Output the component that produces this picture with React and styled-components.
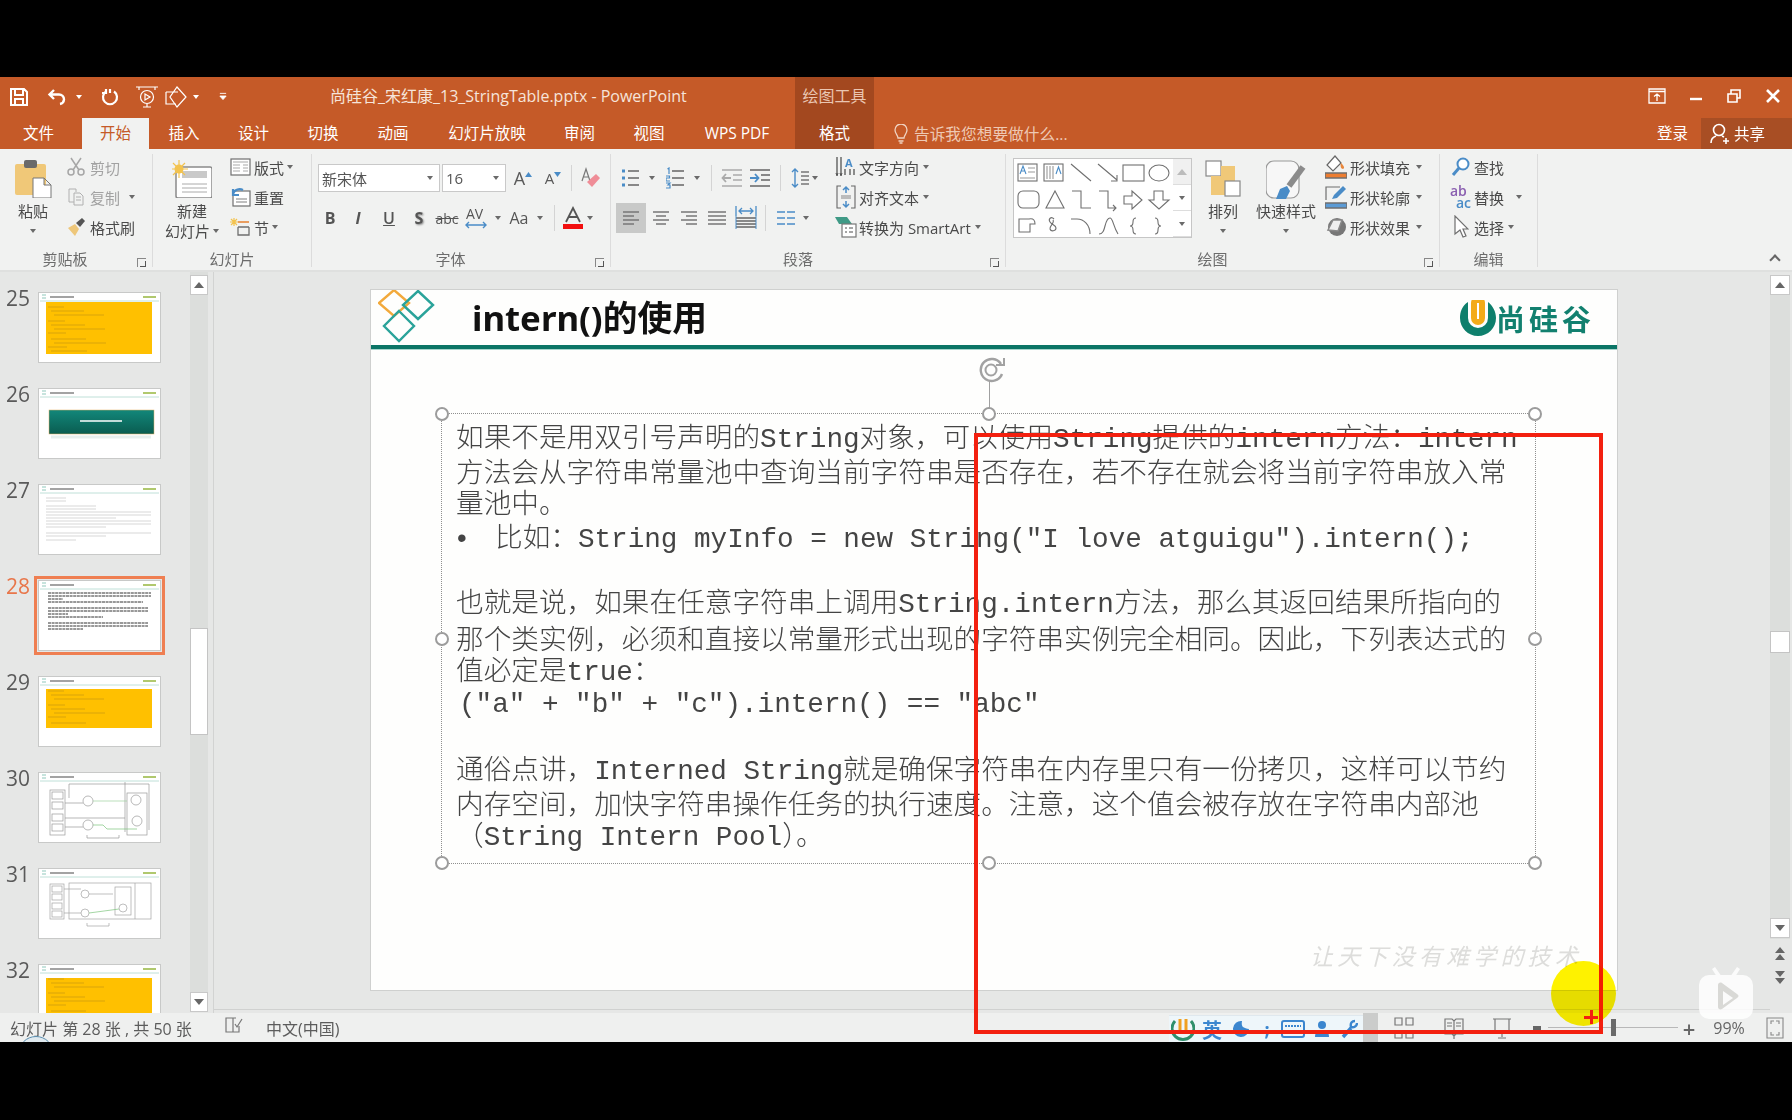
import styled, { createGlobalStyle } from "styled-components";

const GlobalStyle = createGlobalStyle`
  html, body { margin: 0; padding: 0; background: #000; }
  * { box-sizing: border-box; }
`;

const ORANGE = "#c55a28";
const INK = "#4a4a4a";
const BLUE = "#4a8cc7";
const GRAY = "#6f6f6f";

const Page = styled.div`
  position: relative;
  width: 1792px;
  height: 1120px;
  padding: 77px 0 78px;
  background: #000;
  overflow: hidden;
  font-family: "Open Sans", "Noto Sans CJK SC", sans-serif;
`;

const Window = styled.div`
  display: flex;
  flex-direction: column;
  height: 965px;
  filter: blur(0.45px);
`;

const TitleBar = styled.div`
  display: flex;
  align-items: stretch;
  height: 41px;
  background: ${ORANGE};
  color: #fbeee8;
`;

const Qat = styled.div`
  display: flex;
  align-items: center;
  width: 330px;
  padding-left: 9px;
  padding-bottom: 2px;
`;

const QatSlot = styled.div`
  display: flex;
  justify-content: center;
  width: ${(p) => p.$w}px;
  margin-left: ${(p) => p.$ml || 0}px;
`;

const DocTitle = styled.div`
  width: 465px;
  font-size: 16px;
  line-height: 38px;
  white-space: nowrap;
  color: #f6e4da;
`;

const ContextLabel = styled.div`
  width: 79px;
  background: #a3481f;
  text-align: center;
  font-size: 16px;
  line-height: 38px;
  color: #eac6b2;
`;

const WinControls = styled.div`
  display: flex;
  align-items: center;
  margin-left: auto;
  padding-bottom: 4px;
`;

const WinBtn = styled.div`
  display: flex;
  justify-content: center;
  width: 38.5px;
`;

const TabRow = styled.div`
  display: flex;
  height: 31px;
  background: ${ORANGE};
`;

const Tab = styled.div`
  width: ${(p) => p.$w}px;
  padding-right: ${(p) => p.$pr || 0}px;
  text-align: center;
  font-size: 15.5px;
  line-height: 30px;
  white-space: nowrap;
  color: ${(p) => (p.$active ? ORANGE : "#fff")};
  background: ${(p) => (p.$active ? "#f1f2f1" : p.$context ? "#a3481f" : "transparent")};
`;

const TellMe = styled.div`
  display: flex;
  align-items: center;
  gap: 5px;
  margin-left: 19px;
  width: 600px;
  font-size: 15.7px;
  color: #eec9b4;
`;

const SignIn = styled.div`
  margin-left: auto;
  width: 58px;
  padding-right: 13px;
  text-align: right;
  font-size: 15.5px;
  line-height: 30px;
  color: #fff;
`;

const Share = styled.div`
  display: flex;
  align-items: center;
  gap: 4px;
  width: 91px;
  padding-left: 9px;
  background: #a84e24;
  font-size: 15.5px;
  color: #fff;
`;

const Ribbon = styled.div`
  position: relative;
  display: flex;
  height: 123px;
  padding-top: 5px;
  background: #f1f2f1;
  border-bottom: 2px solid #dfe0df;
  color: ${INK};
  font-size: 15px;
`;

const Group = styled.div`
  display: flex;
  flex-direction: column;
  width: ${(p) => p.$w}px;
  height: 113px;
  border-right: 1px solid #dcdcdc;
`;

const GroupBody = styled.div`
  display: flex;
  height: 97px;
  padding-left: ${(p) => p.$pl}px;
  gap: ${(p) => p.$gap || 0}px;
`;

const GroupLabel = styled.div`
  position: relative;
  height: 16px;
  text-align: center;
  font-size: 15px;
  line-height: 16px;
  color: #6c6c6c;
  padding-right: ${(p) => p.$pr || 0}px;
`;

const Launcher = styled.span`
  position: absolute;
  right: 6px;
  bottom: 0;
  width: 9px;
  height: 9px;
  border-left: 1px solid #888;
  border-top: 1px solid #888;
  &::after {
    content: "";
    position: absolute;
    right: 0;
    bottom: 0;
    width: 5px;
    height: 5px;
    border-right: 1px solid #555;
    border-bottom: 1px solid #555;
  }
`;

const LargeBtn = styled.div`
  display: flex;
  flex-direction: column;
  align-items: center;
  width: ${(p) => p.$w}px;
  margin-left: ${(p) => p.$ml || 0}px;
  padding-top: 6px;
  line-height: 20px;
  white-space: nowrap;
`;

const LargeIcon = styled.div`
  display: flex;
  justify-content: center;
  height: 38px;
  margin-bottom: 3px;
`;

const LargeText = styled.div`
  display: flex;
  align-items: center;
  justify-content: center;
  height: 20px;
  gap: 3px;
`;

const SmallCol = styled.div`
  display: flex;
  flex-direction: column;
  margin-top: -2px;
  margin-left: ${(p) => p.$ml || 0}px;
`;

const SmallRow = styled.div`
  display: flex;
  align-items: center;
  height: 30px;
  gap: ${(p) => p.$gap ?? 3}px;
  white-space: nowrap;
  color: ${(p) => (p.$off ? "#a2a2a2" : INK)};
`;

const SmallIcon = styled.div`
  display: flex;
  justify-content: center;
  width: 22px;
`;

const Caret = styled.span`
  display: inline-block;
  flex: none;
  width: 0;
  height: 0;
  margin-left: ${(p) => p.$ml || 0}px;
  border-left: 3.5px solid transparent;
  border-right: 3.5px solid transparent;
  border-top: 4px solid ${(p) => p.$color || "#6a6a6a"};
`;

const ToolCol = styled.div`
  display: flex;
  flex-direction: column;
  gap: 12px;
  width: ${(p) => (p.$w ? `${p.$w}px` : "auto")};
  padding-top: 10px;
`;

const ToolRow = styled.div`
  display: flex;
  align-items: center;
  height: 28px;
`;

const Cell = styled.div`
  display: flex;
  align-items: center;
  justify-content: center;
  flex: none;
  width: ${(p) => p.$w}px;
  height: ${(p) => (p.$active ? "30px" : "auto")};
  background: ${(p) => (p.$active ? "#c8c9c8" : "transparent")};
  color: ${(p) => p.$color || "#555"};
  font-size: ${(p) => p.$size || 16}px;
  font-weight: ${(p) => p.$weight || 400};
  font-style: ${(p) => p.$italic || "normal"};
  text-decoration: ${(p) => p.$deco || "none"};
  text-shadow: ${(p) => (p.$shadow ? "1px 1px 2px #888" : "none")};
`;

const Sep = styled.span`
  flex: none;
  width: 1px;
  height: 26px;
  margin: 0 ${(p) => p.$m || 8}px;
  background: #d4d4d4;
`;

const FontBox = styled.div`
  display: flex;
  align-items: center;
  justify-content: space-between;
  width: ${(p) => p.$w}px;
  height: 28px;
  margin-right: 2px;
  padding: 0 6px 0 3px;
  background: #fff;
  border: 1px solid #c9c9c9;
  font-size: 15px;
  color: #555;
`;

const Gallery = styled.div`
  display: flex;
  width: 179px;
  height: 80px;
  margin-top: 4px;
  background: #fff;
  border: 1px solid #c6c6c6;
`;

const GalleryScroll = styled.div`
  display: flex;
  flex-direction: column;
  width: 18px;
  margin-left: auto;
  background: #ececec;
`;

const GalleryBtn = styled.div`
  display: flex;
  flex: 1;
  align-items: center;
  justify-content: center;
  background: ${(p) => (p.$light ? "#f0f0f0" : "#fff")};
  border-bottom: 1px solid #ddd;
`;

const ReplaceMark = styled.div`
  display: flex;
  flex-direction: column;
  width: 22px;
  font-size: 14px;
  line-height: 12px;
  font-weight: 600;
  color: #8a5fb0;
  span {
    padding-left: 6px;
    color: ${BLUE};
  }
`;

const Collapse = styled.div`
  position: absolute;
  right: 13px;
  bottom: 6px;
  width: 8px;
  height: 8px;
  border-left: 2px solid #666;
  border-top: 2px solid #666;
  transform: rotate(45deg);
`;

const Main = styled.div`
  display: flex;
  height: 741px;
  background: #e6e7e6;
`;

const ThumbPane = styled.div`
  display: flex;
  flex: none;
  width: 214px;
  height: 741px;
  border-right: 1px solid #d2d3d2;
  overflow: hidden;
`;

const ThumbList = styled.div`
  display: flex;
  flex-direction: column;
  gap: 25px;
  width: 190px;
  padding: 20px 0 0 6px;
`;

const ThumbRow = styled.div`
  display: flex;
  flex: none;
  height: 71px;
`;

const ThumbNum = styled.div`
  width: 32px;
  height: 20px;
  margin-top: -4px;
  font-size: 21px;
  line-height: 20px;
  color: ${(p) => (p.$active ? "#e8764a" : "#5a5a5a")};
`;

const ThumbCard = styled.div`
  width: 123px;
  height: 71px;
  background: #fff;
  border: 1px solid #c8c9c8;
  outline: ${(p) => (p.$active ? "3px solid #ef7f52" : "none")};
  outline-offset: 1px;
  svg { display: block; }
`;

const ScrollTrack = styled.div`
  display: flex;
  flex-direction: column;
  flex: none;
  width: ${(p) => p.$w || 18}px;
  height: ${(p) => p.$h || 738}px;
  padding-top: ${(p) => p.$pt || 0}px;
  background: #dcdedc;
`;

const ScrollBtn = styled.div`
  display: flex;
  flex: none;
  align-items: center;
  justify-content: center;
  height: 20px;
  margin-top: ${(p) => p.$mt || 0}px;
  background: #fff;
  border: 1px solid #c8c8c8;
`;

const ScrollThumb = styled.div`
  flex: none;
  height: ${(p) => p.$h}px;
  margin-top: ${(p) => p.$mt}px;
  background: #fff;
  border: 1px solid #c4c4c4;
`;

const Up = styled.span`
  width: 0;
  height: 0;
  border-left: 5px solid transparent;
  border-right: 5px solid transparent;
  border-bottom: 6px solid ${(p) => p.$color || "#666"};
`;

const Down = styled.span`
  width: 0;
  height: 0;
  border-left: 5px solid transparent;
  border-right: 5px solid transparent;
  border-top: 6px solid #666;
`;

const EditArea = styled.div`
  flex: 1;
  height: 738px;
  padding: 17px 0 0 156px;
  border-bottom: 1px solid #d0d1d0;
`;

const Slide = styled.div`
  position: relative;
  width: 1248px;
  height: 702px;
  background: #fefefd;
  border: 1px solid #cfd0cf;
`;

const SlideHeader = styled.div`
  display: flex;
  align-items: center;
  height: 59px;
  padding: 0 22px 0 7px;
  border-bottom: 4px solid #0b7566;
  box-shadow: 0 1px 0 #a8d6cd;
`;

const SlideTitle = styled.h1`
  margin: 0 0 0 36px;
  font-family: "Noto Sans", "Noto Sans CJK SC", sans-serif;
  font-size: 34.8px;
  font-weight: 700;
  line-height: 50px;
  color: #111;
`;

const Brand = styled.div`
  display: flex;
  align-items: center;
  gap: 0;
  margin-left: auto;
  font-family: "Noto Sans CJK SC", sans-serif;
  font-size: 29px;
  font-weight: 700;
  letter-spacing: 4px;
  color: #12806f;
`;

const SlideBody = styled.div`
  padding: 64px 0 0 70px;
`;

const SelectBox = styled.div`
  position: relative;
  width: 1095px;
  height: 451px;
  padding: 11px 0 0 14px;
  border: 1px dotted #8f8f8f;
  font-family: "Liberation Mono", "Noto Sans CJK SC", monospace;
  font-size: 27.65px;
  font-weight: 300;
  color: #444;
`;

const Line = styled.div`
  height: 30px;
  margin-top: ${(p) => p.$mt || 0}px;
  margin-left: ${(p) => p.$ml || 0}px;
  line-height: 30px;
  white-space: nowrap;
`;

const Bullet = styled.span`
  display: inline-block;
  width: 39px;
  padding-left: 1px;
  font-family: "Liberation Sans", sans-serif;
`;

const Handle = styled.span`
  position: absolute;
  left: ${(p) => p.$x}%;
  top: ${(p) => p.$y}%;
  width: 14px;
  height: 14px;
  margin: -7px 0 0 -7px;
  background: #fff;
  border: 2px solid #9c9c9c;
  border-radius: 50%;
`;

const RotateStem = styled.span`
  position: absolute;
  left: 50%;
  top: -34px;
  width: 1px;
  height: 28px;
  background: #a0a0a0;
`;

const RotateKnob = styled.span`
  position: absolute;
  left: calc(50% - 12px);
  top: -58px;
  line-height: 0;
`;

const Watermark = styled.div`
  position: absolute;
  right: 35px;
  bottom: 18px;
  font-family: "Noto Sans CJK SC", sans-serif;
  font-size: 23px;
  font-style: italic;
  letter-spacing: 4.2px;
  color: #dddddb;
`;

const RightBar = styled.div`
  display: flex;
  flex-direction: column;
  flex: none;
  width: 22px;
  padding: 3px 2px 0 0;
`;

const StepBtns = styled.div`
  display: flex;
  flex-direction: column;
  align-items: center;
  gap: 9px;
  padding-top: 8px;
`;

const StatusBar = styled.div`
  position: relative;
  display: flex;
  align-items: center;
  height: 29px;
  padding-left: 10px;
  background: #eff0ef;
  font-size: 16px;
  color: #5c5c5c;
  white-space: nowrap;
  overflow: hidden;
`;

const StatusText = styled.div`
  margin-left: ${(p) => p.$ml || 0}px;
  width: ${(p) => p.$w}px;
`;

const Arc = styled.span`
  position: absolute;
  left: 18px;
  top: 23px;
  width: 36px;
  height: 36px;
  background: #dfe9ee;
  border: 1px solid #5b8fb0;
  border-radius: 50%;
`;

const ImeBar = styled.div`
  display: flex;
  align-items: center;
  width: 194px;
  height: 27px;
  margin-left: auto;
  margin-top: 2px;
  background: #eef6fa;
  border-top: 1px solid #dfe8ee;
`;

const ImeGap = styled.div`
  flex: none;
  width: 15px;
  height: 29px;
  background: #cbcccb;
`;

const Slider = styled.div`
  position: relative;
  flex: none;
  width: 130px;
  height: 1px;
  background: #b8b8b8;
`;

const SliderThumb = styled.span`
  position: absolute;
  left: 63px;
  top: -8px;
  width: 5px;
  height: 17px;
  background: #6a6a6a;
`;

const RedRect = styled.div`
  position: absolute;
  left: 974px;
  top: 433px;
  width: 629px;
  height: 601px;
  border: 4px solid #f3200f;
  filter: blur(0.4px);
`;

const Crosshair = styled.div`
  position: absolute;
  left: 1584px;
  top: 1010px;
  width: 14px;
  height: 14px;
  background:
    linear-gradient(#f3200f, #f3200f) center / 100% 3px no-repeat,
    linear-gradient(#f3200f, #f3200f) center / 3px 100% no-repeat;
`;

const Spotlight = styled.div`
  position: absolute;
  left: 1551px;
  top: 961px;
  width: 65px;
  height: 65px;
  background: #fff300;
  border-radius: 50%;
  mix-blend-mode: multiply;
`;

const TvBadge = styled.div`
  position: absolute;
  left: 1698px;
  top: 966px;
  line-height: 0;
`;

const stroke = { fill: "none", stroke: "currentColor", strokeWidth: 1.5 };

const Ic = ({ w = 20, h = 20, color = GRAY, children }) => (
  <svg width={w} height={h} viewBox={`0 0 ${w} ${h}`} style={{ color }} {...stroke}>
    {children}
  </svg>
);

const SaveIcon = () => (
  <Ic color="#fff" w={20} h={20}>
    <path strokeWidth="2" d="M2 2h13l3 3v13H2zM6 2v6h8V2M6 18v-6h8v6" />
  </Ic>
);
const UndoIcon = () => (
  <Ic color="#fff" w={20} h={20}>
    <path strokeWidth="2.4" d="M7 3 2.5 7.5 7 12M3 7.5h9a5 5 0 0 1 5 5v0a5 5 0 0 1-4 4.5" />
  </Ic>
);
const RepeatIcon = () => (
  <Ic color="#fff" w={20} h={20}>
    <path strokeWidth="2.2" d="M6 4.5a7 7 0 1 0 8 0M10 2v4M6 2v4H2" />
  </Ic>
);
const ShowIcon = () => (
  <Ic color="#fff" w={24} h={24}>
    <path strokeWidth="1.2" d="M1 2h22M4 2v3M20 2v3M8 22h8M12 19v3" />
    <circle cx="12" cy="12" r="6.5" strokeWidth="1.2" />
    <path strokeWidth="1.2" d="m10 9 5 3-5 3z" />
  </Ic>
);
const TouchIcon = () => (
  <Ic color="#fff" w={24} h={24}>
    <path strokeWidth="1.2" d="M1 7h12M1 7v12h10M12 2l9 10-9 10-7-10z" />
  </Ic>
);

const PasteIcon = () => (
  <Ic w={37} h={38}>
    <rect x="0" y="4" width="31" height="31" rx="2" fill="#f0c878" stroke="none" />
    <rect x="9" y="0" width="13" height="8" rx="2" fill="#6a6a6a" stroke="none" />
    <path fill="#fff" stroke="#777" strokeWidth="1" d="M18 18h11l7 7v13H18zM29 18v7h7" />
  </Ic>
);
const CutIcon = () => (
  <Ic color="#a6a6a6">
    <circle cx="5" cy="15" r="3" />
    <circle cx="15" cy="15" r="3" />
    <path d="M7 13 15 1M13 13 5 1" />
  </Ic>
);
const CopyIcon = () => (
  <Ic color="#b0b0b0">
    <path strokeWidth="1" d="M3 2h7v3M3 2v13h5M8 6h6l3 3v9H8zM10 10h5M10 13h5" />
  </Ic>
);
const BrushIcon = () => (
  <Ic>
    <path fill="#eec77a" stroke="none" d="M2 11 9 7l4 5-4 7z" />
    <path fill="#555" stroke="none" d="m10 6 6-5 3 3-5 6z" />
  </Ic>
);
const NewSlideIcon = () => (
  <Ic w={40} h={38}>
    <rect x="4" y="7" width="36" height="31" rx="2" fill="#fff" stroke="#8a8a8a" />
    <rect x="10" y="11" width="25" height="7" fill="#c9c9c9" stroke="none" />
    <path stroke="#aaa" strokeWidth="1" d="M10 24h25M10 28h25M10 32h25" />
    <circle cx="7" cy="9" r="4.5" fill="#f3c34e" stroke="none" />
    <path stroke="#f3c34e" strokeWidth="1.2" d="M7 0v18M-2 9h18M1 3l12 12M13 3 1 15" />
  </Ic>
);
const LayoutIcon = () => (
  <Ic w={21} h={20}>
    <rect x="1" y="2" width="19" height="16" strokeWidth="1.2" fill="#fff" />
    <path stroke="#aaa" strokeWidth="1.2" d="M3 5h15M3 8h7M13 8h5M3 11h7M13 11h5M3 14h7M13 14h5" />
  </Ic>
);
const ResetIcon = () => (
  <Ic w={21} h={20}>
    <rect x="3" y="4" width="17" height="15" fill="#fff" strokeWidth="1.2" />
    <path stroke="#aaa" d="M6 12h11M6 15h11" />
    <path stroke={BLUE} strokeWidth="2.2" d="M3 7c1-4 6-6 10-4M3 2v6h6" />
  </Ic>
);
const SectionIcon = () => (
  <Ic w={21} h={20}>
    <path stroke="#f3c34e" strokeWidth="1.2" d="M4 1v8M0 5h8M1 2l6 6M7 2 1 8" />
    <path stroke="#e8873c" strokeWidth="1.6" d="M8 5h11" />
    <path strokeWidth="1.3" d="M8 10h11M8 10v8h11v-8" />
  </Ic>
);
const ClearFormatIcon = () => (
  <Ic w={22} h={22}>
    <path stroke="#777" strokeWidth="1.2" d="M3 14 7 2l4 12M4 10h6" />
    <path fill="#ef8d97" stroke="none" d="m8 15 9-8 4 4-8 9z" />
  </Ic>
);
const GrowIcon = ({ mark, small }) => (
  <Cell $w={30} $size={small ? 15 : 18} $color="#5a5a5a">
    A
    <svg width="7" height="14" viewBox="0 0 7 14">
      <path fill={BLUE} d={mark === "up" ? "M0 6 3.5 1 7 6z" : "M0 1h7L3.5 6z"} />
    </svg>
  </Cell>
);
const AvIcon = () => (
  <Cell $w={32} $size={14} $color="#555">
    <svg width="26" height="26" viewBox="0 0 26 26" fill="none">
      <text x="3" y="14" fontFamily="Open Sans" fontSize="14" fill="#555">AV</text>
      <path stroke={BLUE} strokeWidth="1.4" d="M3 20h20M6 17l-3 3 3 3M20 17l3 3-3 3" />
    </svg>
  </Cell>
);
const FontColorIcon = () => (
  <svg width="20" height="24" viewBox="0 0 20 24" fill="none">
    <path stroke="#555" strokeWidth="1.8" d="M3 16 10 2l7 14M6 11h8" />
    <rect x="0" y="18" width="20" height="5" fill="#f20f0f" />
  </svg>
);
const BulletsIcon = () => (
  <Ic w={18} h={20}>
    <path stroke="#666" strokeWidth="1.4" d="M6 3h11M6 10h11M6 17h11" />
    <path stroke={BLUE} strokeWidth="3" d="M0 3h3M0 10h3M0 17h3" />
  </Ic>
);
const NumbersIcon = () => (
  <Ic w={18} h={22}>
    <path stroke="#666" strokeWidth="1.4" d="M6 4h12M6 11h12M6 18h12" />
    <path stroke={BLUE} strokeWidth="1.2" d="M1.5 2l1.5-1v6M0 9h3.5v2H0v3h4M0 16h4l-2 2h2v3H0" />
  </Ic>
);
const IndentIcon = ({ inc }) => (
  <Ic w={22} h={20}>
    <path stroke={inc ? "#666" : "#aaa"} strokeWidth="1.4" d="M1 2h20M12 7h9M12 12h9M1 18h20" />
    <path stroke={inc ? BLUE : "#aaa"} strokeWidth="1.8" d={inc ? "M1 10h8M6 6l3.5 4L6 14" : "M10 10H2M5 6l-3.5 4L5 14"} />
  </Ic>
);
const SpacingIcon = () => (
  <Ic w={18} h={24}>
    <path stroke={BLUE} strokeWidth="1.4" d="M4 3v18M1 6l3-3 3 3M1 18l3 3 3-3" />
    <path stroke="#777" strokeWidth="1.4" d="M10 6h8M10 10h8M10 14h8M10 18h8" />
  </Ic>
);
const AlignIcon = ({ lines }) => (
  <Ic w={20} h={20}>
    <path stroke="#777" strokeWidth="1.5" d={lines} />
  </Ic>
);
const DistributedIcon = () => (
  <Ic w={22} h={24}>
    <path stroke={BLUE} strokeWidth="1.3" d="M1 0v10M21 0v10M4 5h14M7 2 4 5l3 3M15 2l3 3-3 3" />
    <path stroke="#666" strokeWidth="1.5" d="M1 12h20M1 15h20M1 18h20M1 21h20" />
    <path stroke={BLUE} strokeWidth="1" d="M1 10v13M21 10v13" />
  </Ic>
);
const ColumnsIcon = () => (
  <Ic w={18} h={16}>
    <path stroke={BLUE} strokeWidth="1.6" d="M0 2h8M10 2h8M0 8h8M10 8h8M0 14h8M10 14h8" />
  </Ic>
);
const TextDirIcon = () => (
  <svg width="20" height="24" viewBox="0 0 20 24" fill="none" overflow="visible">
    <text x="9" y="12" fontFamily="Open Sans" fontWeight="700" fontSize="11" fill={BLUE}>A</text>
    <path stroke="#555" strokeWidth="1.3" d="M1 2v18M5 2v18M9 14v6M14 14v6M18 14v6" />
    <path stroke="#555" strokeWidth="1" d="M0 18l1 3 1-3M4 18l1 3 1-3" />
  </svg>
);
const AlignTextIcon = () => (
  <Ic w={20} h={24}>
    <path stroke="#666" strokeWidth="1.1" d="M5 1H1v22h4M15 1h4v22h-4" />
    <path stroke={BLUE} strokeWidth="1.5" d="M10 2v6M7 5l3-3 3 3M10 22v-6M7 19l3 3 3-3" />
    <path stroke="#aaa" d="M5 11h10M5 13h10" />
  </Ic>
);
const SmartArtIcon = () => (
  <Ic w={22} h={22}>
    <path fill="#3f9a86" stroke="none" d="M0 1h12l5 7H4z" />
    <rect x="7" y="8" width="14" height="13" fill="#fff" stroke="#777" strokeWidth="1.2" />
    <path stroke="#888" d="M10 12h2M14 12h4M10 16h2M14 16h4" />
  </Ic>
);
const ArrangeIcon = () => (
  <Ic w={37} h={38}>
    <rect x="1" y="1" width="15" height="15" fill="#fff" stroke="#888" strokeWidth="1.2" />
    <path fill="#f0c878" stroke="none" d="M16 6h14v15h-8v14H6V16h10z" />
    <rect x="20" y="21" width="15" height="15" fill="#fff" stroke="#888" strokeWidth="1.2" />
  </Ic>
);
const QuickStyleIcon = () => (
  <Ic w={40} h={40}>
    <rect x="0" y="1" width="33" height="37" rx="8" fill="#f7f7f7" stroke="#999" strokeWidth="1.2" />
    <path fill={BLUE} stroke="none" d="m10 39 4-10 7-3 3 5-4 8z" />
    <path stroke="#8b8b8b" strokeWidth="6" d="m23 26 14-19" />
  </Ic>
);
const FillIcon = () => (
  <Ic w={22} h={24}>
    <path fill="#fff" stroke="#666" strokeWidth="1.2" d="M10 1 2 10l6 6 8-8z" />
    <path fill="#e8873c" stroke="none" d="M16 8c3 3 4 5 2 6-2 0-3-3-2-6z" />
    <rect x="0" y="18" width="22" height="5" fill="#ed7d31" />
  </Ic>
);
const OutlineIcon = () => (
  <Ic w={22} h={24}>
    <path strokeWidth="1.2" d="M1 15V2h14" />
    <path fill={BLUE} stroke="none" d="m7 14 2-4 9-9 3 3-9 9z" />
    <rect x="0" y="18" width="22" height="5" fill="#5b9bd5" />
  </Ic>
);
const EffectIcon = () => (
  <Ic w={22} h={22}>
    <circle cx="12" cy="11" r="9" fill="#777" stroke="none" />
    <path fill="#eee" stroke="#888" d="M3 14 8 4h9l-4 11z" />
  </Ic>
);
const FindIcon = () => (
  <Ic w={20} h={20}>
    <circle cx="12" cy="7" r="5.5" strokeWidth="2" stroke={BLUE} fill="#fff" />
    <path stroke={BLUE} strokeWidth="3" d="M8 11 2 18" />
  </Ic>
);
const SelectIcon = () => (
  <Ic w={16} h={24}>
    <path strokeWidth="1.2" fill="#fff" d="M2 1v18l5-4 3 7 3-1-3-7h5z" />
  </Ic>
);

const DiamondLogo = () => (
  <svg width="58" height="56" viewBox="0 0 58 56" fill="none" strokeWidth="2.4">
    <path stroke="#f2a93b" d="M16 0 31 13 16 26 1 13z" />
    <path stroke="#2aa39a" d="M40 1 55 15 40 29 25 15z" />
    <path stroke="#2aa39a" d="M21 21 36 36 21 51 6 36z" />
  </svg>
);

const BrandMark = () => (
  <svg width="36" height="36" viewBox="0 0 36 36">
    <path fill="#0e7f6c" d="M8 2C2 6 0 12 0 18c0 10 8 18 18 18s18-8 18-18c0-6-3-12-8-16v16a10 10 0 0 1-20 0z" />
    <path fill="#f3ab19" d="M11 3a7 7 0 0 1 14 0v15a7 7 0 0 1-14 0z" />
    <path fill="#fff" d="M17 3h2v16h-2z" />
  </svg>
);

const RotateHandle = () => (
  <svg width="30" height="28" viewBox="0 0 30 28" fill="none" stroke="#a2a2a2">
    <path strokeWidth="2.4" d="M24 8a11 11 0 1 0 1 10" />
    <circle cx="14" cy="14" r="5.5" strokeWidth="2" />
    <path strokeWidth="2" d="M19 9h8V2" />
  </svg>
);

const ShapesGallery = () => (
  <svg width="158" height="78" viewBox="0 0 158 78" fill="none" stroke="#707070" strokeWidth="1.1">
    <rect x="4" y="5" width="19" height="17" />
    <path stroke={BLUE} d="M6 15l3-8 3 8M7 12h4" />
    <path stroke="#999" d="M14 9h7M14 13h7M6 19h15" />
    <rect x="30" y="5" width="19" height="17" />
    <path stroke="#999" d="M33 7v13M36 7v13M39 7v13" />
    <path stroke={BLUE} d="M42 15l2.5-7 2.5 7" />
    <path d="m57 5 20 17M84 5l19 16M103 16v6h-6" />
    <rect x="109" y="6" width="21" height="16" />
    <ellipse cx="145" cy="14" rx="10" ry="8" />
    <rect x="4" y="32" width="21" height="17" rx="5" />
    <path d="M41 32 50 49H32z" />
    <path d="M58 32h9v17h10M85 32h9v17h8M99 46l3 3-3 3" />
    <path d="M110 37h8v-5l10 9-10 9v-5h-8z" />
    <path d="M140 32h9v9h6l-10 9-10-9h5z" />
    <path d="M5 60h10c5-1 6 2 6 5h-5v8H5z" />
    <path d="M40 60c-3-3-6 0-4 3 2 3 6 3 6 6s-5 4-6 1 5-6 3-9" />
    <path d="M57 60h6c7 0 13 6 13 15M85 75c4 0 5-4 6-8 1-4 2-8 5-8 3 0 3 8 8 16" />
    <path d="M122 59c-3 0-3 2-3 4s0 4-3 4c3 0 3 2 3 4s0 4 3 4M141 59c3 0 3 2 3 4s0 4 3 4c-3 0-3 2-3 4s0 4-3 4" />
  </svg>
);

const codeLines = [14, 18, 22, 28, 32, 36, 40, 46, 50, 54, 58];

const ThumbFrame = ({ children }) => (
  <svg width="121" height="69" viewBox="0 0 121 69" fill="none">
    <path stroke="#8fc8bb" strokeWidth="1" d="M3 2h4M3 5h4" />
    <path stroke="#666" strokeWidth="1.2" d="M11 4h24" />
    <path stroke="#9dbb4a" strokeWidth="1.6" d="M104 4h13" />
    <path stroke="#bfe0d8" strokeWidth="1" d="M1 8h119" />
    {children}
  </svg>
);

const ThumbCode = ({ top, height }) => (
  <ThumbFrame>
    <rect x="7" y={top} width="106" height={height} fill="#ffc000" />
    {codeLines
      .filter((y) => y + 4 > top && y < top + height - 2)
      .map((y, i) => (
        <path key={y} stroke="#c99a10" strokeWidth="0.7" d={`M${9 + (i % 3) * 3} ${y}h${16 + ((i * 17) % 50)}`} />
      ))}
  </ThumbFrame>
);

const ThumbSection = () => (
  <ThumbFrame>
    <defs>
      <linearGradient id="sectionFill" x1="0" y1="0" x2="0" y2="1">
        <stop offset="0" stopColor="#12877a" />
        <stop offset="1" stopColor="#0a5c50" />
      </linearGradient>
    </defs>
    <rect x="10" y="21" width="105" height="24" fill="url(#sectionFill)" stroke="#e8b060" strokeWidth="0.5" />
    <path stroke="#fff" strokeWidth="1.6" d="M41 32h42" />
    <path stroke="#e7efee" strokeWidth="3" d="M12 48h100" />
  </ThumbFrame>
);

const ThumbText = ({ dark }) => {
  const c = dark ? "#333" : "#cdcdcd";
  const w = dark ? 1 : 0.8;
  const rows = dark
    ? [[12, 103], [15, 103], [18, 15], [21, 95], [27, 100], [30, 100], [33, 20], [36, 55], [42, 100], [45, 100], [48, 35]]
    : [[13, 20], [16, 20], [21, 50], [24, 50], [27, 105], [30, 105], [33, 70], [36, 105], [39, 105], [42, 60], [48, 105], [51, 60], [55, 30]];
  return (
    <ThumbFrame>
      {rows.map(([y, len]) => (
        <path key={y} stroke={c} strokeWidth={w} strokeDasharray={dark ? "3 0.6" : "none"} d={`M${dark ? 9 : 7} ${y}h${len}`} />
      ))}
    </ThumbFrame>
  );
};

const ThumbDiagramA = () => (
  <ThumbFrame>
    <g stroke="#9a9a9a" strokeWidth="0.7">
      <rect x="11" y="17" width="15" height="45" />
      <rect x="13" y="19" width="11" height="7" />
      <rect x="13" y="29" width="11" height="7" />
      <rect x="13" y="41" width="11" height="7" />
      <rect x="13" y="51" width="11" height="7" />
      <circle cx="49" cy="28" r="5" />
      <circle cx="49" cy="52" r="5" />
      <rect x="88" y="20" width="20" height="42" />
      <circle cx="97" cy="27" r="5" />
      <circle cx="98" cy="48" r="5" />
      <path d="M30 11h80v46M86 9v50M30 11v14M26 30h18M26 45h60M26 54h18" />
      <path d="M54 28h34" stroke="#9fd19f" />
      <path d="M54 52h10l4 4h30" stroke="#7cc47c" />
      <path d="M48 62v3h32v-3" />
    </g>
  </ThumbFrame>
);

const ThumbDiagramB = () => (
  <ThumbFrame>
    <g stroke="#a4a4a4" strokeWidth="0.7">
      <rect x="11" y="15" width="14" height="35" />
      <rect x="13" y="17" width="10" height="6" />
      <rect x="13" y="25" width="10" height="6" />
      <rect x="13" y="34" width="10" height="6" />
      <rect x="13" y="42" width="10" height="6" />
      <rect x="30" y="14" width="82" height="36" />
      <path d="M96 14v36" />
      <circle cx="46" cy="25" r="4" />
      <circle cx="46" cy="44" r="4" />
      <rect x="76" y="18" width="16" height="28" />
      <circle cx="84" cy="39" r="4" />
      <path d="M25 20h17M50 25h24M25 44h17M48 54v3h22v-3" />
      <path d="M50 44l30-4" stroke="#7cc47c" />
    </g>
  </ThumbFrame>
);

const slides = [
  { n: 25, thumb: <ThumbCode top={9} height={52} /> },
  { n: 26, thumb: <ThumbSection /> },
  { n: 27, thumb: <ThumbText /> },
  { n: 28, thumb: <ThumbText dark />, active: true },
  { n: 29, thumb: <ThumbCode top={12} height={39} /> },
  { n: 30, thumb: <ThumbDiagramA /> },
  { n: 31, thumb: <ThumbDiagramB /> },
  { n: 32, thumb: <ThumbCode top={13} height={56} /> },
];

const tabs = [
  ["文件", 82, 5],
  ["开始", 67, 0, "active"],
  ["插入", 70],
  ["设计", 69],
  ["切换", 70],
  ["动画", 70],
  ["幻灯片放映", 118],
  ["审阅", 67],
  ["视图", 72],
  ["WPS PDF", 110, 6],
];

function TitleRow() {
  return (
    <TitleBar>
      <Qat>
        <QatSlot $w={20}><SaveIcon /></QatSlot>
        <QatSlot $w={38} $ml={9}><UndoIcon /></QatSlot>
        <QatSlot $w={6}><Caret $color="#fff" /></QatSlot>
        <QatSlot $w={20} $ml={18}><RepeatIcon /></QatSlot>
        <QatSlot $w={24} $ml={15}><ShowIcon /></QatSlot>
        <QatSlot $w={24} $ml={6}><TouchIcon /></QatSlot>
        <QatSlot $w={8} $ml={3}><Caret $color="#fff" /></QatSlot>
        <QatSlot $w={8} $ml={19}>
          <svg width="9" height="9" viewBox="0 0 9 9" stroke="#fff"><path d="M1 1h7" /><path fill="#fff" d="M1 4h7L4.5 8z" /></svg>
        </QatSlot>
      </Qat>
      <DocTitle>尚硅谷_宋红康_13_StringTable.pptx - PowerPoint</DocTitle>
      <ContextLabel>绘图工具</ContextLabel>
      <WinControls>
        <WinBtn>
          <Ic color="#fff" w={18} h={16}>
            <path strokeWidth="1.3" d="M1 1h16v14H1zM1 3.5h16M9 13V6M6 8.5 9 6l3 2.5" />
          </Ic>
        </WinBtn>
        <WinBtn><Ic color="#fff" w={14} h={14}><path strokeWidth="2.4" d="M1 10h12" /></Ic></WinBtn>
        <WinBtn>
          <Ic color="#fff" w={14} h={14}><path strokeWidth="1.6" d="M1 5h9v8H1zM4 5V1h9v8h-3" /></Ic>
        </WinBtn>
        <WinBtn><Ic color="#fff" w={14} h={14}><path strokeWidth="2.6" d="m1 1 12 12M13 1 1 13" /></Ic></WinBtn>
      </WinControls>
    </TitleBar>
  );
}

function Tabs() {
  return (
    <TabRow>
      {tabs.map(([label, w, pr, state]) => (
        <Tab key={label} $w={w} $pr={pr} $active={state === "active"}>{label}</Tab>
      ))}
      <Tab $w={79} $context>格式</Tab>
      <TellMe>
        <Ic color="#f0d3c2" w={16} h={20}>
          <path strokeWidth="1.3" d="M5 14c0-3-3-4-3-8a6 6 0 0 1 12 0c0 4-3 5-3 8zM5.5 17h5M6.5 19h3" />
        </Ic>
        告诉我您想要做什么...
      </TellMe>
      <SignIn>登录</SignIn>
      <Share>
        <Ic color="#fff" w={20} h={22}>
          <circle cx="9" cy="7" r="5.5" strokeWidth="1.6" />
          <path strokeWidth="1.6" d="M1 20c0-4 2-6 5-7M12 13c1 .4 2 1 2 1M13 18h6M16 15v6" />
        </Ic>
        共享
      </Share>
    </TabRow>
  );
}

function RibbonArea() {
  return (
    <Ribbon>
      <Group $w={153}>
        <GroupBody $pl={13} $gap={12}>
          <LargeBtn $w={40}>
            <LargeIcon><PasteIcon /></LargeIcon>
            <LargeText>粘贴</LargeText>
            <LargeText><Caret /></LargeText>
          </LargeBtn>
          <SmallCol>
            <SmallRow $off><SmallIcon><CutIcon /></SmallIcon>剪切</SmallRow>
            <SmallRow $off><SmallIcon><CopyIcon /></SmallIcon>复制<Caret $ml={6} /></SmallRow>
            <SmallRow><SmallIcon><BrushIcon /></SmallIcon>格式刷</SmallRow>
          </SmallCol>
        </GroupBody>
        <GroupLabel $pr={22}>剪贴板<Launcher /></GroupLabel>
      </Group>

      <Group $w={159}>
        <GroupBody $pl={19} $gap={17}>
          <LargeBtn $w={40}>
            <LargeIcon><NewSlideIcon /></LargeIcon>
            <LargeText>新建</LargeText>
            <LargeText>幻灯片<Caret /></LargeText>
          </LargeBtn>
          <SmallCol>
            <SmallRow><SmallIcon><LayoutIcon /></SmallIcon>版式<Caret /></SmallRow>
            <SmallRow><SmallIcon><ResetIcon /></SmallIcon>重置</SmallRow>
            <SmallRow><SmallIcon><SectionIcon /></SmallIcon>节<Caret /></SmallRow>
          </SmallCol>
        </GroupBody>
        <GroupLabel>幻灯片</GroupLabel>
      </Group>

      <Group $w={299}>
        <GroupBody $pl={6}>
          <ToolCol>
            <ToolRow>
              <FontBox $w={122}>新宋体<Caret /></FontBox>
              <FontBox $w={64}>16<Caret /></FontBox>
              <GrowIcon mark="up" />
              <GrowIcon mark="down" small />
              <Sep $m={3} />
              <Cell $w={30}><ClearFormatIcon /></Cell>
            </ToolRow>
            <ToolRow>
              <Cell $w={24} $weight={700}>B</Cell>
              <Cell $w={32} $italic="italic" $weight={700}>I</Cell>
              <Cell $w={30} $weight={600} $deco="underline">U</Cell>
              <Cell $w={30} $weight={700} $shadow>S</Cell>
              <Cell $w={26} $size={14} $deco="line-through">abc</Cell>
              <AvIcon />
              <Cell $w={12}><Caret /></Cell>
              <Cell $w={30}>Aa</Cell>
              <Cell $w={12}><Caret /></Cell>
              <Sep $m={8} />
              <Cell $w={20}><FontColorIcon /></Cell>
              <Cell $w={14}><Caret /></Cell>
            </ToolRow>
          </ToolCol>
        </GroupBody>
        <GroupLabel $pr={21}>字体<Launcher /></GroupLabel>
      </Group>

      <Group $w={395}>
        <GroupBody $pl={5}>
          <ToolCol $w={219}>
            <ToolRow>
              <Cell $w={30}><BulletsIcon /></Cell>
              <Cell $w={12}><Caret /></Cell>
              <Cell $w={34}><NumbersIcon /></Cell>
              <Cell $w={10}><Caret /></Cell>
              <Sep $m={9} />
              <Cell $w={22}><IndentIcon /></Cell>
              <Cell $w={6} />
              <Cell $w={22}><IndentIcon inc /></Cell>
              <Sep $m={9} />
              <Cell $w={20}><SpacingIcon /></Cell>
              <Cell $w={10}><Caret /></Cell>
            </ToolRow>
            <ToolRow>
              <Cell $w={30} $active><AlignIcon lines="M2 4h16M2 8h11M2 12h16M2 16h11" /></Cell>
              <Cell $w={29}><AlignIcon lines="M2 4h16M5 8h10M2 12h16M5 16h10" /></Cell>
              <Cell $w={28}><AlignIcon lines="M2 4h16M7 8h11M2 12h16M7 16h11" /></Cell>
              <Cell $w={28}><AlignIcon lines="M1 4h18M1 8h18M1 12h18M1 16h18" /></Cell>
              <Cell $w={29}><DistributedIcon /></Cell>
              <Sep $m={5} />
              <Cell $w={30}><ColumnsIcon /></Cell>
              <Cell $w={10}><Caret /></Cell>
            </ToolRow>
          </ToolCol>
          <SmallCol>
            <SmallRow $gap={2}><SmallIcon><TextDirIcon /></SmallIcon>文字方向<Caret $ml={2} /></SmallRow>
            <SmallRow $gap={2}><SmallIcon><AlignTextIcon /></SmallIcon>对齐文本<Caret $ml={2} /></SmallRow>
            <SmallRow $gap={2}><SmallIcon><SmartArtIcon /></SmallIcon>转换为 SmartArt<Caret $ml={2} /></SmallRow>
          </SmallCol>
        </GroupBody>
        <GroupLabel $pr={20}>段落<Launcher /></GroupLabel>
      </Group>

      <Group $w={434}>
        <GroupBody $pl={7}>
          <Gallery>
            <ShapesGallery />
            <GalleryScroll>
              <GalleryBtn $light><Up $color="#bbb" /></GalleryBtn>
              <GalleryBtn><Caret /></GalleryBtn>
              <GalleryBtn><Caret /></GalleryBtn>
            </GalleryScroll>
          </Gallery>
          <LargeBtn $w={46} $ml={8}>
            <LargeIcon><ArrangeIcon /></LargeIcon>
            <LargeText>排列</LargeText>
            <LargeText><Caret /></LargeText>
          </LargeBtn>
          <LargeBtn $w={64} $ml={8}>
            <LargeIcon><QuickStyleIcon /></LargeIcon>
            <LargeText>快速样式</LargeText>
            <LargeText><Caret /></LargeText>
          </LargeBtn>
          <SmallCol $ml={7}>
            <SmallRow><SmallIcon><FillIcon /></SmallIcon>形状填充<Caret $ml={3} /></SmallRow>
            <SmallRow><SmallIcon><OutlineIcon /></SmallIcon>形状轮廓<Caret $ml={3} /></SmallRow>
            <SmallRow><SmallIcon><EffectIcon /></SmallIcon>形状效果<Caret $ml={3} /></SmallRow>
          </SmallCol>
        </GroupBody>
        <GroupLabel $pr={20}>绘图<Launcher /></GroupLabel>
      </Group>

      <Group $w={98}>
        <GroupBody $pl={10}>
          <SmallCol>
            <SmallRow $gap={2}><SmallIcon><FindIcon /></SmallIcon>查找</SmallRow>
            <SmallRow $gap={2}><SmallIcon><ReplaceMark>ab<span>ac</span></ReplaceMark></SmallIcon>替换<Caret $ml={10} /></SmallRow>
            <SmallRow $gap={2}><SmallIcon><SelectIcon /></SmallIcon>选择<Caret $ml={2} /></SmallRow>
          </SmallCol>
        </GroupBody>
        <GroupLabel>编辑</GroupLabel>
      </Group>
      <Collapse />
    </Ribbon>
  );
}

function Thumbs() {
  return (
    <ThumbPane>
      <ThumbList>
        {slides.map((s) => (
          <ThumbRow key={s.n}>
            <ThumbNum $active={s.active}>{s.n}</ThumbNum>
            <ThumbCard $active={s.active}>{s.thumb}</ThumbCard>
          </ThumbRow>
        ))}
      </ThumbList>
      <ScrollTrack $pt={3}>
        <ScrollBtn><Up /></ScrollBtn>
        <ScrollThumb $mt={333} $h={107} />
        <ScrollBtn $mt={257}><Down /></ScrollBtn>
      </ScrollTrack>
    </ThumbPane>
  );
}

function SlideCanvas() {
  return (
    <EditArea>
      <Slide>
        <SlideHeader>
          <DiamondLogo />
          <SlideTitle>intern()的使用</SlideTitle>
          <Brand><BrandMark />尚硅谷</Brand>
        </SlideHeader>
        <SlideBody>
          <SelectBox>
            <RotateStem />
            <RotateKnob><RotateHandle /></RotateKnob>
            <Line>如果不是用双引号声明的String对象，可以使用String提供的intern方法：intern</Line>
            <Line $mt={5}>方法会从字符串常量池中查询当前字符串是否存在，若不存在就会将当前字符串放入常</Line>
            <Line $mt={1}>量池中。</Line>
            <Line $mt={2}><Bullet>•</Bullet>比如：String myInfo = new String("I love atguigu").intern();</Line>
            <Line $mt={37}>也就是说，如果在任意字符串上调用String.intern方法，那么其返回结果所指向的</Line>
            <Line $mt={7}>那个类实例，必须和直接以常量形式出现的字符串实例完全相同。因此，下列表达式的</Line>
            <Line $mt={1}>值必定是true：</Line>
            <Line $mt={2} $ml={3}>("a" + "b" + "c").intern() == "abc"</Line>
            <Line $mt={37}>通俗点讲，Interned String就是确保字符串在内存里只有一份拷贝，这样可以节约</Line>
            <Line $mt={5}>内存空间，加快字符串操作任务的执行速度。注意，这个值会被存放在字符串内部池</Line>
            <Line $mt={1}>（String Intern Pool）。</Line>
            <Handle $x={0} $y={0} />
            <Handle $x={50} $y={0} />
            <Handle $x={100} $y={0} />
            <Handle $x={0} $y={50} />
            <Handle $x={100} $y={50} />
            <Handle $x={0} $y={100} />
            <Handle $x={50} $y={100} />
            <Handle $x={100} $y={100} />
          </SelectBox>
        </SlideBody>
        <Watermark>让天下没有难学的技术</Watermark>
      </Slide>
    </EditArea>
  );
}

function RightScroll() {
  return (
    <RightBar>
      <ScrollTrack $w={20} $h={664}>
        <ScrollBtn><Up /></ScrollBtn>
        <ScrollThumb $mt={336} $h={22} />
        <ScrollBtn $mt={265}><Down /></ScrollBtn>
      </ScrollTrack>
      <StepBtns>
        <Ic w={14} h={14} color="#666">
          <path fill="#666" stroke="none" d="M7 0l5 6H2zM7 7l5 6H2z" />
        </Ic>
        <Ic w={14} h={14} color="#666">
          <path fill="#666" stroke="none" d="M2 1h10L7 7zM2 8h10l-5 6z" />
        </Ic>
      </StepBtns>
    </RightBar>
  );
}

function Status() {
  return (
    <StatusBar>
      <Arc />
      <StatusText $w={188}>幻灯片 第 28 张 , 共 50 张</StatusText>
      <StatusText $ml={27} $w={18}>
        <Ic w={18} h={18} color="#777">
          <path strokeWidth="1.2" d="M1 2h7v14H1zM8 2h3M8 16h6v-6M10 8l2 3 5-8" />
        </Ic>
      </StatusText>
      <StatusText $ml={23} $w={90}>中文(中国)</StatusText>
      <ImeBar>
        <Cell $w={28}>
          <svg width="24" height="26" viewBox="0 0 24 26" fill="none">
            <path stroke="#2f8f6c" strokeWidth="3" d="M4 5a11 11 0 1 0 16 0" />
            <path stroke="#f0a020" strokeWidth="3" d="M9 3v12M15 3v12" />
          </svg>
        </Cell>
        <Cell $w={30} $size={20} $weight={700} $color="#3b86cf">英</Cell>
        <Cell $w={30}>
          <svg width="18" height="18" viewBox="0 0 18 18"><path fill="#3b86cf" d="M9 1c-1 6 1 7 7 8a8 8 0 1 1-7-8z" /></svg>
        </Cell>
        <Cell $w={20} $size={18} $weight={700} $color="#3b86cf">;</Cell>
        <Cell $w={32}>
          <svg width="24" height="18" viewBox="0 0 24 18" fill="none">
            <rect x="1" y="1" width="22" height="16" rx="2" stroke="#3b86cf" strokeWidth="2" />
            <path stroke="#3b86cf" strokeWidth="2" strokeDasharray="2 1" d="M4 6h16" />
          </svg>
        </Cell>
        <Cell $w={26}>
          <svg width="16" height="18" viewBox="0 0 16 18"><circle cx="8" cy="5" r="4" fill="#3b86cf" /><path fill="#3b86cf" d="M1 17c0-5 3-7 7-7s7 2 7 7z" /></svg>
        </Cell>
        <Cell $w={28}>
          <svg width="18" height="20" viewBox="0 0 18 20" fill="none">
            <path stroke="#3b86cf" strokeWidth="3.4" d="m3 18 8-9" />
            <path stroke="#3b86cf" strokeWidth="2.4" d="M15 2c-3 0-5 2-4 6 3 1 6-1 6-4" />
          </svg>
        </Cell>
      </ImeBar>
      <ImeGap />
      <Cell $w={52}>
        <Ic w={20} h={22} color="#777"><path strokeWidth="1.2" d="M1 1h7v7H1zM12 1h7v7h-7zM1 14h7v7H1zM12 14h7v7h-7z" /></Ic>
      </Cell>
      <Cell $w={48}>
        <Ic w={20} h={22} color="#777"><path strokeWidth="1.2" d="M1 2h7l2 2 2-2h7v15h-7l-2 2-2-2H1zM10 4v18M3 6h5M3 9h5M12 6h5M12 9h5" /></Ic>
      </Cell>
      <Cell $w={48}>
        <Ic w={20} h={22} color="#777"><path strokeWidth="1.2" d="M1 2h18M3 2v12h14V2M10 14v6M6 21h8" /></Ic>
      </Cell>
      <Cell $w={22}><Ic w={10} h={6} color="#666"><path strokeWidth="4" d="M1 3h8" /></Ic></Cell>
      <Slider><SliderThumb /></Slider>
      <Cell $w={22} $size={22} $color="#666" $weight={600}>+</Cell>
      <Cell $w={58} $size={16} $color="#666">99%</Cell>
      <Cell $w={34}>
        <Ic w={18} h={22} color="#888"><path strokeWidth="1.1" d="M1 1h16v20H1zM5 7V4h3M13 7V4h-3M5 15v3h3M13 15v3h-3" /></Ic>
      </Cell>
    </StatusBar>
  );
}

function App() {
  return (
    <>
      <GlobalStyle />
      <Page>
        <Window>
          <TitleRow />
          <Tabs />
          <RibbonArea />
          <Main>
            <Thumbs />
            <SlideCanvas />
            <RightScroll />
          </Main>
          <Status />
        </Window>
        <RedRect />
        <Spotlight />
        <Crosshair />
        <TvBadge>
          <svg width="56" height="54" viewBox="0 0 56 54">
            <g fill="#fff" opacity="0.82">
              <path d="M19 11 14 3l3-2 7 10zM37 11l5-8-3-2-7 10z" />
              <rect x="1" y="9" width="54" height="44" rx="10" />
            </g>
            <path fill="#d9d9d6" d="M20 19c0-2 2-3 4-2l15 11c2 1 2 3 0 4l-15 11c-2 1-4 0-4-2z" />
            <path fill="#fbfbfb" d="M25 25v14l10-7z" />
          </svg>
        </TvBadge>
      </Page>
    </>
  );
}

export default App;
